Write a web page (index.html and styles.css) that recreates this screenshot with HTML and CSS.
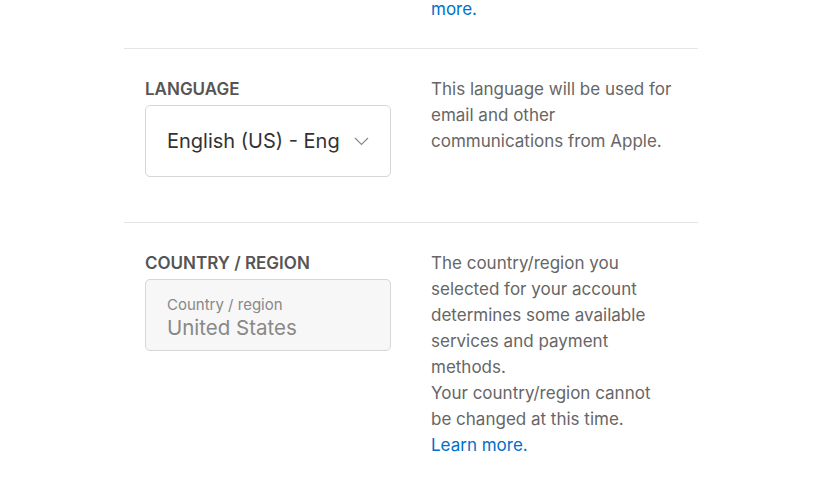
FILE: index.html
```html
<!DOCTYPE html>
<html lang="en">
<head>
<meta charset="utf-8">
<title>Account settings</title>
<link rel="stylesheet" href="styles.css">
</head>
<body>
<div class="page">
  <section class="row row-prev">
    <div class="col-left"></div>
    <div class="col-right"><a class="link" href="#">more.</a></div>
  </section>
  <section class="row">
    <div class="col-left">
      <div class="label">LANGUAGE</div>
      <div class="select">
        <span class="select-text">English (US) - Eng</span>
        <svg class="chevron" width="15" height="9" viewBox="0 0 15 9"><path d="M1 1 L7.5 7.5 L14 1" fill="none" stroke="#8a8a8a" stroke-width="1.2"/></svg>
      </div>
    </div>
    <div class="col-right desc">This language will be used for email and other communications from Apple.</div>
  </section>
  <section class="row">
    <div class="col-left">
      <div class="label">COUNTRY / REGION</div>
      <div class="field">
        <span class="field-label">Country / region</span>
        <span class="field-value">United States</span>
      </div>
    </div>
    <div class="col-right desc">The country/region you selected for your account determines some available services and payment methods.<br>Your country/region cannot be changed at this time.<br><a class="link" href="#">Learn more.</a></div>
  </section>
</div>
</body>
</html>
```
FILE: styles.css
```css
html, body {
  margin: 0;
  padding: 0;
  background: #fff;
}
body {
  font-family: "Inter", "Liberation Sans", Arial, sans-serif;
  color: #666;
  -webkit-font-smoothing: antialiased;
}
.page {
  width: 574px;
  margin: 0 auto;
}
.row {
  display: flex;
  gap: 40px;
  padding: 27px 0 45px 21px;
  border-top: 1px solid #e5e5e5;
}
.row-prev {
  border-top: none;
  margin-top: -4px;
  padding: 0 0 26px 21px;
}
.col-left {
  width: 246px;
  flex: none;
}
.col-right {
  width: 242px;
}
.desc, .row-prev .col-right {
  font-size: 17px;
  line-height: 26px;
  color: #666;
}
.link {
  color: #0070c9;
  text-decoration: none;
}
.label {
  font-size: 17px;
  line-height: 26px;
  font-weight: 600;
  color: #555;
  margin-bottom: 3px;
}
.select {
  box-sizing: border-box;
  height: 72px;
  border: 1px solid #d6d6d6;
  border-radius: 5px;
  display: flex;
  align-items: center;
  padding: 0 21px 0 21px;
  background: #fff;
}
.select-text {
  flex: 1;
  min-width: 0;
  white-space: nowrap;
  font-size: 20px;
  color: #333;
}
.chevron {
  flex: none;
  margin-top: 1px;
}
.field {
  box-sizing: border-box;
  height: 72px;
  border: 1px solid #d6d6d6;
  border-radius: 5px;
  background: #f7f7f7;
  display: flex;
  flex-direction: column;
  justify-content: center;
  padding: 5px 21px 0;
}
.field-label {
  font-size: 15px;
  line-height: 20px;
  color: #888;
}
.field-value {
  font-size: 20.5px;
  line-height: 26px;
  color: #888;
}
```
